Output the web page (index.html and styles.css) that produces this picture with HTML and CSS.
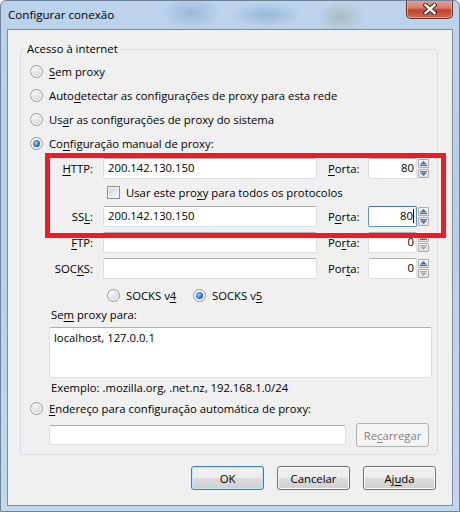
FILE: index.html
```html
<!DOCTYPE html>
<html lang="pt">
<head>
  <meta charset="UTF-8" />
  <title>Configurar conexão</title>
  <link rel="stylesheet" href="styles.css">
</head>
<body>
  <div class="window">
    <div class="titlebar">
      <span class="title">Configurar conexão</span>
      <div class="close">
        <svg width="14" height="12" viewBox="0 0 14 12">
          <path d="M2.5 2 L11.5 10 M11.5 2 L2.5 10" stroke="#3a2a28" stroke-width="4.4" stroke-linecap="square"/>
          <path d="M2.5 2 L11.5 10 M11.5 2 L2.5 10" stroke="#fff" stroke-width="2.4" stroke-linecap="square"/>
        </svg>
      </div>
    </div>

    <div class="client">
      <fieldset class="group">
        <legend>Acesso à internet</legend>
        <div class="inner">
          <div class="opt"><span class="radio"></span><span><u>S</u>em proxy</span></div>
          <div class="opt"><span class="radio"></span><span>Auto<u>d</u>etectar as configurações de proxy para esta rede</span></div>
          <div class="opt"><span class="radio"></span><span>Us<u>a</u>r as configurações de proxy do sistema</span></div>
          <div class="opt"><span class="radio on"></span><span>Co<u>n</u>figuração manual de proxy:</span></div>

          <!-- Proxy manual -->
          <div class="manual">
            <div class="row">
              <span class="lbl"><u>H</u>TTP:</span>
              <div class="field host">200.142.130.150</div>
              <span class="plbl"><u>P</u>orta:</span>
              <div class="field port">80</div>
              <div class="spin">
                <span class="up"><svg width="7" height="5"><path d="M3.5 0 L7 3.5 H0Z" fill="#4e6da6"/><rect y="4" width="7" height="1" fill="#4e6da6"/></svg></span>
                <span class="down"><svg width="7" height="5"><rect width="7" height="1" fill="#4e6da6"/><path d="M0 1.5 H7 L3.5 5Z" fill="#4e6da6"/></svg></span>
              </div>
            </div>
            <div class="chkrow">
              <span class="check"></span><span>Usar este pro<u>x</u>y para todos os protocolos</span>
            </div>
            <div class="row">
              <span class="lbl">SS<u>L</u>:</span>
              <div class="field host">200.142.130.150</div>
              <span class="plbl">P<u>o</u>rta:</span>
              <div class="field port focus">80<span class="caret"></span></div>
              <div class="spin">
                <span class="up"><svg width="7" height="5"><path d="M3.5 0 L7 3.5 H0Z" fill="#4e6da6"/><rect y="4" width="7" height="1" fill="#4e6da6"/></svg></span>
                <span class="down"><svg width="7" height="5"><rect width="7" height="1" fill="#4e6da6"/><path d="M0 1.5 H7 L3.5 5Z" fill="#4e6da6"/></svg></span>
              </div>
            </div>
            <div class="row">
              <span class="lbl"><u>F</u>TP:</span>
              <div class="field host"></div>
              <span class="plbl">Po<u>r</u>ta:</span>
              <div class="field port">0</div>
              <div class="spin">
                <span class="up"><svg width="7" height="5"><path d="M3.5 0 L7 3.5 H0Z" fill="#4e6da6"/><rect y="4" width="7" height="1" fill="#4e6da6"/></svg></span>
                <span class="down"><svg width="7" height="5"><rect width="7" height="1" fill="#a8a8a8"/><path d="M0 1.5 H7 L3.5 5Z" fill="#a8a8a8"/></svg></span>
              </div>
            </div>
            <div class="row">
              <span class="lbl">SOC<u>K</u>S:</span>
              <div class="field host"></div>
              <span class="plbl">Por<u>t</u>a:</span>
              <div class="field port">0</div>
              <div class="spin">
                <span class="up"><svg width="7" height="5"><path d="M3.5 0 L7 3.5 H0Z" fill="#4e6da6"/><rect y="4" width="7" height="1" fill="#4e6da6"/></svg></span>
                <span class="down"><svg width="7" height="5"><rect width="7" height="1" fill="#a8a8a8"/><path d="M0 1.5 H7 L3.5 5Z" fill="#a8a8a8"/></svg></span>
              </div>
            </div>
          </div>

          <div class="socksver">
            <div class="opt v4"><span class="radio"></span><span>SOCKS v<u>4</u></span></div>
            <div class="opt"><span class="radio on"></span><span>SOCKS v<u>5</u></span></div>
          </div>

          <div class="text-lbl">Se<u>m</u> proxy para:</div>
          <div class="field area">localhost, 127.0.0.1</div>
          <div class="text-lbl hint">Exemplo: .mozilla.org, .net.nz, 192.168.1.0/24</div>

          <div class="opt"><span class="radio"></span><span><u>E</u>ndereço para configuração automática de proxy:</span></div>
          <div class="urlrow">
            <div class="field url"></div>
            <button class="btn disabled">Re<u>c</u>arregar</button>
          </div>
        </div>
      </fieldset>

      <div class="buttons">
        <button class="btn default">OK</button>
        <button class="btn">Cancelar</button>
        <button class="btn">Aj<u>u</u>da</button>
      </div>
    </div>

    <div class="highlight"></div>
  </div>
</body>
</html>
```

FILE: styles.css
```css
* { box-sizing: border-box; }

body {
  margin: 0;
  font-family: "Open Sans", "Noto Sans", sans-serif;
  font-size: 11.3px;
  color: #000;
  background: #fff;
}

u { text-decoration: underline; text-underline-offset: 2px; }

.window {
  position: relative;
  width: 460px;
  height: 512px;
  background:
    radial-gradient(ellipse 30px 16px at 190px 12px, rgba(90,140,190,.35), transparent),
    radial-gradient(ellipse 36px 12px at 265px 14px, rgba(90,130,180,.35), transparent),
    radial-gradient(ellipse 24px 16px at 340px 16px, rgba(140,150,120,.35), transparent),
    linear-gradient(to bottom, #bcd3ec, #b7cfe9 40%, #c3d8ef);
  border: 1px solid #6f8297;
  border-radius: 6px 6px 0 0;
  overflow: hidden;
}

.titlebar {
  height: 28px;
  display: flex;
  justify-content: space-between;
  align-items: flex-start;
  padding: 0 6px 0 7px;
}

.title {
  font-size: 11.6px;
  line-height: 28px;
}

.close {
  width: 47px;
  height: 19px;
  margin-top: -1px;
  display: flex;
  align-items: center;
  justify-content: center;
  border: 1px solid #6a2c24;
  border-top: none;
  border-radius: 0 0 5px 5px;
  background: linear-gradient(to bottom, #e8a494, #d47a68 45%, #c2412e 55%, #cf6a52);
  box-shadow: inset 0 0 0 1px rgba(255,220,210,.5);
}

.client {
  margin: 0 6px;
  height: 477px;
  border: 1px solid #7f8d9e;
  background: #f0f0f0;
}

.group {
  margin: 11px 14px 0 12px;
  padding: 0 0 7px 0;
  border: 1px solid #d5dfe5;
  border-radius: 3px;
  min-width: 0;
}

.group legend {
  margin-left: 4px;
  padding: 0 2px;
  line-height: 16px;
}

.inner {
  padding: 2px 0 0 9px;
}

.opt {
  height: 24px;
  display: flex;
  align-items: center;
  gap: 6px;
}

.radio {
  width: 13px;
  height: 13px;
  border-radius: 50%;
  border: 1px solid #979797;
  background: radial-gradient(circle at 35% 35%, #f6f6f6, #d8d8d8 70%, #e8e8e8);
  box-shadow: inset 0 0 0 1px #fff;
  position: relative;
  flex: none;
}

.radio.on::after {
  content: "";
  position: absolute;
  left: 2px;
  top: 2px;
  width: 7px;
  height: 7px;
  border-radius: 50%;
  background: radial-gradient(circle at 40% 40%, #8cd0f7, #2a6fb4 60%, #1b4e8a);
}

.check {
  width: 13px;
  height: 13px;
  border: 1px solid #8e8f8f;
  background: linear-gradient(135deg, #d4d4d4, #f6f6f6);
  box-shadow: inset 0 0 0 1px #f4f4f4;
  flex: none;
}

.field {
  background: #fff;
  border: 1px solid #dbdfe6;
  border-top-color: #abadb3;
  border-radius: 2px;
  line-height: 18px;
  padding: 0 3px;
}

.manual {
  margin: 3px 0 0 19px;
  display: flex;
  flex-direction: column;
  gap: 5px;
}

.row {
  height: 21px;
  display: flex;
  align-items: center;
}

.lbl {
  width: 44px;
  margin-right: 10px;
  text-align: right;
}

.host {
  width: 214px;
  height: 21px;
  padding-left: 4px;
}

.plbl {
  width: 51px;
  padding-left: 11px;
}

.port {
  width: 49px;
  height: 21px;
  text-align: right;
  padding-right: 2px;
}

.port.focus {
  border-color: #5c93bc;
  border-top-color: #3d7bad;
}

.caret {
  display: inline-block;
  width: 1px;
  height: 14px;
  background: #000;
  vertical-align: -3px;
}

.spin {
  margin-left: 1px;
  width: 11px;
  height: 19px;
  display: flex;
  flex-direction: column;
  gap: 1px;
}

.spin span {
  flex: 1;
  display: flex;
  align-items: center;
  justify-content: center;
  border: 1px solid #acacac;
  border-radius: 1px;
  background: linear-gradient(to bottom, #f6f6f6, #e2e2e2);
}

.chkrow {
  height: 17px;
  margin-left: 58px;
  display: flex;
  align-items: center;
  gap: 6px;
}

.socksver {
  margin: 4px 0 0 77px;
  display: flex;
}

.socksver .v4 { width: 86px; }

.text-lbl {
  margin-left: 21px;
  line-height: 16px;
}

.text-lbl.hint { margin-top: 2px; }

.area {
  margin: 4px 0 0 19px;
  width: 383px;
  height: 51px;
  padding: 2px 4px;
  line-height: 16px;
}

.urlrow {
  margin: 3px 0 0 19px;
  height: 24px;
  display: flex;
  align-items: center;
  gap: 10px;
}

.url {
  width: 297px;
  height: 20px;
}

.btn {
  width: 73px;
  height: 24px;
  padding: 0;
  font-family: inherit;
  font-size: inherit;
  color: #000;
  border: 1px solid #707070;
  border-radius: 3px;
  background: linear-gradient(to bottom, #f2f2f2, #ebebeb 50%, #dddddd 50%, #cfcfcf);
  box-shadow: inset 0 0 0 1px #fbfbfb;
}

.btn.default {
  border-color: #3c7fb1;
  box-shadow: inset 0 0 0 1px #c4e5f6;
}

.btn.disabled {
  color: #838383;
  border-color: #adb2b5;
  background: #f4f4f4;
  box-shadow: none;
}

.buttons {
  margin-top: 11px;
  padding-right: 16px;
  display: flex;
  justify-content: flex-end;
  gap: 13px;
}

/* marcacao vermelha por cima */
.highlight {
  position: absolute;
  left: 44px;
  top: 152px;
  width: 401px;
  height: 85px;
  border: 5px solid #ed1c24;
}
```
